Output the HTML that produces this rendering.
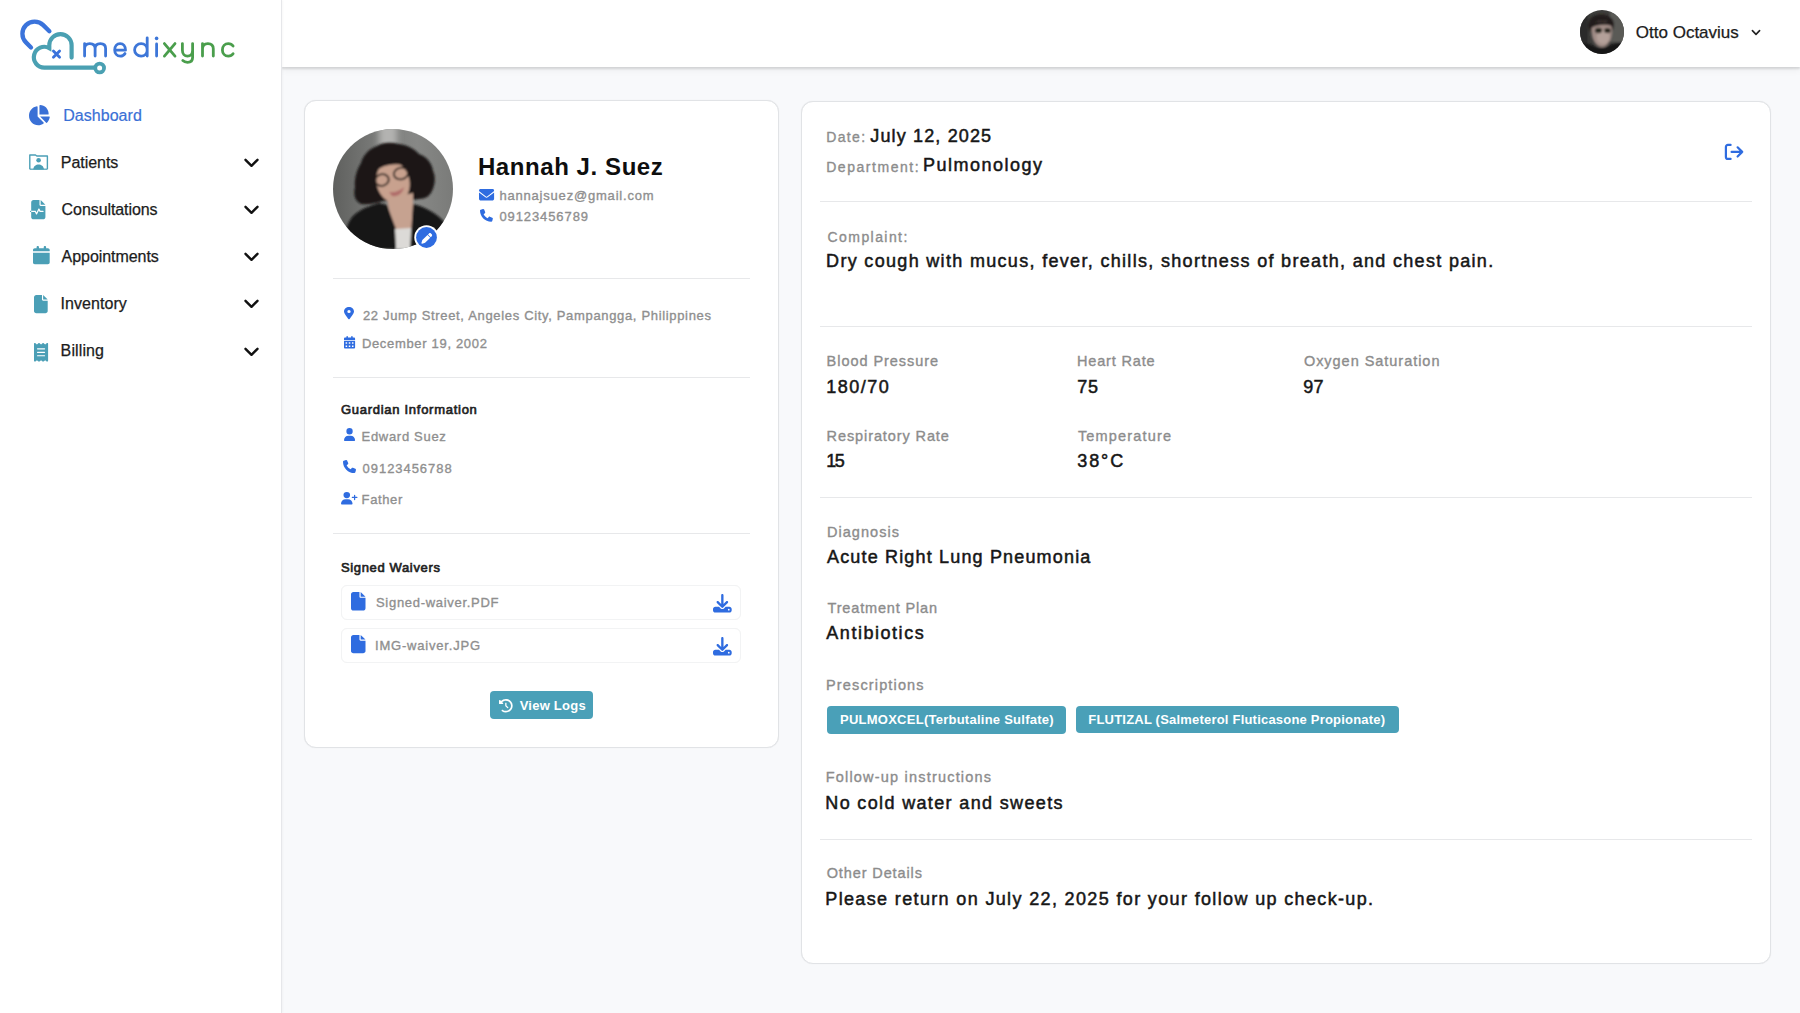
<!DOCTYPE html>
<html><head><meta charset="utf-8">
<style>
html,body{margin:0;padding:0;}
body{width:1800px;height:1013px;overflow:hidden;background:#f8f9fb;position:relative;font-family:"Liberation Sans",sans-serif;}
.t{position:absolute;white-space:nowrap;line-height:1;z-index:2;}
.ic{position:absolute;overflow:visible;z-index:2;}
.abs{position:absolute;}
#sidebar{left:0;top:0;width:281px;height:1013px;background:#fff;border-right:1px solid #e6e7ea;box-shadow:1px 0 2px rgba(0,0,0,0.03);z-index:1;}
#header{left:282px;top:0;width:1518px;height:67px;background:#fff;box-shadow:0 2px 2px rgba(0,0,0,0.12),0 3px 8px rgba(0,0,0,0.05);}
.card{position:absolute;background:#fff;border:1px solid #e1e3e6;border-radius:12px;box-sizing:border-box;box-shadow:0 0 1px rgba(0,0,0,0.10);}
.hr{position:absolute;height:1px;background:#e7e8ea;}
.frow{position:absolute;border:1px solid #f2f3f4;box-shadow:0 0 1px rgba(0,0,0,0.03);border-radius:6px;box-sizing:border-box;background:#fff;}
.badge{position:absolute;background:#4aa0b8;border-radius:4px;}
.chev{position:absolute;}
</style></head><body>
<div id="sidebar" class="abs"></div>
<div id="header" class="abs"></div>
<div class="card" style="left:304px;top:100px;width:475px;height:648px;"></div>
<div class="card" style="left:801px;top:101px;width:970px;height:863px;"></div>
<!-- card1 dividers -->
<div class="hr" style="left:333px;top:278px;width:417px;"></div>
<div class="hr" style="left:333px;top:377px;width:417px;"></div>
<div class="hr" style="left:333px;top:533px;width:417px;"></div>
<!-- card2 dividers -->
<div class="hr" style="left:820px;top:201px;width:932px;"></div>
<div class="hr" style="left:820px;top:326px;width:932px;"></div>
<div class="hr" style="left:820px;top:497px;width:932px;"></div>
<div class="hr" style="left:820px;top:839px;width:932px;"></div>
<!-- file rows -->
<div class="frow" style="left:341px;top:585px;width:400px;height:35px;"></div>
<div class="frow" style="left:341px;top:628px;width:400px;height:35px;"></div>
<!-- view logs -->
<div class="badge" style="left:490px;top:691px;width:103px;height:28px;"></div>
<!-- badges -->
<div class="badge" style="left:827px;top:705.5px;width:239px;height:28px;"></div>
<div class="badge" style="left:1075.5px;top:705.5px;width:323px;height:27.5px;"></div>

<!-- logo -->
<svg class="ic" style="left:0;top:0;width:250px;height:80px" viewBox="0 0 250 80">
  <path d="M31 47.4 L25.97 42.38 A12.2 12.2 0 0 1 43.23 25.12 L49.4 31.3" fill="none" stroke="#3a73db" stroke-width="4.3" stroke-linecap="round" stroke-linejoin="round"/>
  <path d="M71.6 57.6 V45.25 A11.15 11.15 0 0 0 49.3 45.25 V48.1 A10.4 10.4 0 1 0 44.3 67.6 H95" fill="none" stroke="#4aa0b2" stroke-width="4.2" stroke-linecap="round" stroke-linejoin="miter"/>
  <circle cx="99.65" cy="68" r="4.4" fill="none" stroke="#4aa0b2" stroke-width="3.8"/>
  <path d="M53.4 51.1 L59.6 57.3 M59.6 51.1 L53.4 57.3" stroke="#3a73db" stroke-width="2.8" stroke-linecap="round"/>
  <g fill="none" stroke-width="2.8" stroke-linecap="round" stroke-linejoin="round">
   <g stroke="#3d76d8">
    <path d="M84.6 56.1 V43.6 M84.6 48.6 C84.6 45.3 86.8 43.6 89.8 43.6 C92.8 43.6 95.1 45.3 95.1 48.6 V56.1 M95.1 48.6 C95.1 45.3 97.4 43.6 100.4 43.6 C103.4 43.6 105.6 45.3 105.6 48.6 V56.1"/>
    <path d="M114.8 50.2 H125.5 C125.5 46.3 123.3 43.6 120.1 43.6 C116.9 43.6 114.7 46.4 114.7 49.9 C114.7 53.5 117 56.1 120.3 56.1 C122.4 56.1 124 55.1 125 53.6"/>
    <path d="M147.2 37.8 V56.1 M147.2 49.9 C147.2 46.2 144.6 43.6 141.1 43.6 C137.5 43.6 134.6 46.4 134.6 49.9 C134.6 53.4 137.5 56.1 141.1 56.1 C144.6 56.1 147.2 53.5 147.2 49.9"/>
    <path d="M156.6 44 V56.1"/>
   </g>
   <circle cx="156.6" cy="38.4" r="1.8" fill="#3d76d8" stroke="none"/>
   <g stroke="#4a9e4c">
    <path d="M164.4 43.6 L175 56.1 M175 43.6 L164.4 56.1"/>
    <path d="M182.4 43.6 V50.2 C182.4 54 184.6 56.1 187.5 56.1 C190.4 56.1 192.6 54 192.6 50.2 M192.6 43.6 V57.5 C192.6 60.8 190.6 62.3 187.5 62.3 C185.4 62.3 183.8 61.6 182.8 60.6"/>
    <path d="M202.5 56.1 V43.6 M202.5 48.8 C202.5 45.4 204.8 43.6 207.9 43.6 C211 43.6 213.3 45.4 213.3 48.8 V56.1"/>
    <path d="M233.1 46 C232 44.4 230.3 43.6 228.3 43.6 C224.8 43.6 222.4 46.4 222.4 49.9 C222.4 53.4 224.8 56.1 228.3 56.1 C230.3 56.1 232 55.3 233.1 53.7"/>
   </g>
  </g>
</svg>

<!-- patients icon (folder with user) -->
<svg class="ic" style="left:28.9px;top:154px;width:19.2px;height:16px" viewBox="0 0 19.2 16">
  <path d="M0.8 15.2 V1 H6.5 L7.8 2 H18.4 V15.2" fill="none" stroke="#4b9fb6" stroke-width="1.4" stroke-linejoin="round"/>
  <circle cx="9.6" cy="6.3" r="2.3" fill="#4b9fb6"/>
  <path d="M4.2 15.6 C4.6 12 7 10.6 9.6 10.6 C12.2 10.6 14.6 12 15 15.6 Z" fill="#4b9fb6"/>
  <path d="M0.8 15.2 H18.4" stroke="#4b9fb6" stroke-width="1.2"/>
</svg>

<!-- chevrons -->
<svg class="ic" style="left:244px;top:157.8px;width:15px;height:10px" viewBox="0 0 15 10"><path d="M1.5 1.8 L7.5 7.8 L13.5 1.8" fill="none" stroke="#111" stroke-width="2.4" stroke-linecap="round" stroke-linejoin="round"/></svg>
<svg class="ic" style="left:244px;top:205.0px;width:15px;height:10px" viewBox="0 0 15 10"><path d="M1.5 1.8 L7.5 7.8 L13.5 1.8" fill="none" stroke="#111" stroke-width="2.4" stroke-linecap="round" stroke-linejoin="round"/></svg>
<svg class="ic" style="left:244px;top:252.2px;width:15px;height:10px" viewBox="0 0 15 10"><path d="M1.5 1.8 L7.5 7.8 L13.5 1.8" fill="none" stroke="#111" stroke-width="2.4" stroke-linecap="round" stroke-linejoin="round"/></svg>
<svg class="ic" style="left:244px;top:299.4px;width:15px;height:10px" viewBox="0 0 15 10"><path d="M1.5 1.8 L7.5 7.8 L13.5 1.8" fill="none" stroke="#111" stroke-width="2.4" stroke-linecap="round" stroke-linejoin="round"/></svg>
<svg class="ic" style="left:244px;top:346.6px;width:15px;height:10px" viewBox="0 0 15 10"><path d="M1.5 1.8 L7.5 7.8 L13.5 1.8" fill="none" stroke="#111" stroke-width="2.4" stroke-linecap="round" stroke-linejoin="round"/></svg>
<!-- header chevron -->
<svg class="ic" style="left:1751px;top:29px;width:10px;height:8px" viewBox="0 0 10 8"><path d="M1.4 1.6 L5 5.4 L8.6 1.6" fill="none" stroke="#222" stroke-width="1.6" stroke-linecap="round" stroke-linejoin="round"/></svg>

<!-- logout icon -->
<svg class="ic" style="left:1724px;top:143px;width:20px;height:17.5px" viewBox="0 0 20 17.5">
  <path d="M6.6 1.9 H3.9 A2 2 0 0 0 1.9 3.9 V13.9 A2 2 0 0 0 3.9 15.9 H6.6" fill="none" stroke="#2f6ce0" stroke-width="2.2" stroke-linecap="round" stroke-linejoin="round"/>
  <path d="M7.6 8.9 H18.2 M13.6 4.3 L18.2 8.9 L13.6 13.5" fill="none" stroke="#2f6ce0" stroke-width="2.2" stroke-linecap="round" stroke-linejoin="round"/>
</svg>

<!-- header avatar -->
<svg class="ic" style="left:1580px;top:10px;width:44px;height:44px" viewBox="0 0 44 44">
  <defs><clipPath id="ca"><circle cx="22" cy="22" r="22"/></clipPath>
  <filter id="bl1" x="-20%" y="-20%" width="140%" height="140%"><feGaussianBlur stdDeviation="0.8"/></filter></defs>
  <g clip-path="url(#ca)">
    <rect width="44" height="44" fill="#3d3d3b"/>
    <g filter="url(#bl1)">
    <rect x="30" y="-2" width="16" height="34" fill="#5a5a57"/>
    <rect x="-2" y="-2" width="10" height="46" fill="#2c2c2b"/>
    <path d="M8 16 C8 8 14 4 22 4.5 C30 5 34 9 34 15 L33 20 L10 22 Z" fill="#241f1d"/>
    <path d="M11.5 20 C11.5 13 16 11 22 11 C28 11 32 13.5 32 20 C32 30 28 37 22 37 C16 37 11.5 30 11.5 20 Z" fill="#a08c86"/>
    <ellipse cx="23" cy="27" rx="6.5" ry="7" fill="#b3a099"/>
    <path d="M10 15 C14 11 22 10 32 13 L32 16 C26 14 18 14 11 18 Z" fill="#231e1c"/>
    <ellipse cx="18.5" cy="20.5" rx="3.6" ry="2.7" fill="#25251f"/>
    <ellipse cx="27.5" cy="20.5" rx="3.3" ry="2.6" fill="#25251f"/>
    <path d="M-2 46 L-2 36 C4 32 10 33 16 37 C20 39 26 38 30 35 C34 33 40 32 46 34 L46 46 Z" fill="#171717"/>
    </g>
  </g>
</svg>

<!-- patient avatar -->
<svg class="ic" style="left:333px;top:129px;width:120px;height:120px" viewBox="0 0 120 120">
  <defs><clipPath id="cb"><circle cx="60" cy="60" r="60"/></clipPath>
  <filter id="bl2" x="-20%" y="-20%" width="140%" height="140%"><feGaussianBlur stdDeviation="1.1"/></filter>
  <filter id="bl3" x="-50%" y="-50%" width="200%" height="200%"><feGaussianBlur stdDeviation="3"/></filter>
  <linearGradient id="bg2" x1="0" y1="0" x2="1" y2="0"><stop offset="0" stop-color="#5f605e"/><stop offset="0.4" stop-color="#7d7e7c"/><stop offset="0.7" stop-color="#878886"/><stop offset="1" stop-color="#7a7b79"/></linearGradient></defs>
  <g clip-path="url(#cb)">
    <rect width="120" height="120" fill="url(#bg2)"/>
    <rect x="46" y="-6" width="18" height="26" fill="#b3b3b1" filter="url(#bl3)"/>
    <g filter="url(#bl2)">
    <path d="M44 17 C50 13 58 13 66 15 C74 16 82 20 86 25 C94 28 99 34 100 42 C103 48 102 56 99 62 C97 67 92 70 86 70 L72 72 L50 72 C44 74 36 76 28 75 C22 72 20 66 22 58 C21 50 24 40 28 34 C30 26 36 20 44 17 Z" fill="#1b1817"/>
    <ellipse cx="60" cy="53" rx="16.5" ry="21" transform="rotate(-14 60 53)" fill="#c8a18e"/>
    <path d="M40 40 C44 30 54 26 66 28 C74 30 80 34 82 40 C74 36 64 34 56 36 C50 37 44 40 40 44 Z" fill="#1b1817"/>
    <path d="M54 70 L80 64 L80 100 L60 100 Z" fill="#c6a290"/>
    <ellipse cx="49" cy="51" rx="6.8" ry="5.8" fill="none" stroke="#2c211d" stroke-width="1.9" transform="rotate(-14 49 51)"/>
    <ellipse cx="68" cy="44.5" rx="7.2" ry="5.8" fill="none" stroke="#2c211d" stroke-width="1.9" transform="rotate(-14 68 44.5)"/>
    <path d="M56 63 C61 64 67 62 71 58 C70 64 65 68 59 67 Z" fill="#b06d6a"/>
    <path d="M10 120 L14 98 C18 86 26 80 46 74 L54 76 L63 100 L63 120 Z" fill="#131313"/>
    <path d="M77 120 L80 75 C92 78 104 84 112 94 L114 120 Z" fill="#151515"/>
    <path d="M62 100 L78 99 L77 120 L63 120 Z" fill="#dcdad7"/>
    </g>
  </g>
</svg>
<!-- edit badge -->
<svg class="ic" style="left:414.2px;top:224.5px;width:25px;height:25px" viewBox="0 0 25 25">
  <circle cx="12.5" cy="12.5" r="12.2" fill="#fff"/>
  <circle cx="12.5" cy="12.5" r="10.4" fill="#2f6ce0"/>
  <g transform="translate(7.4,8) scale(0.021)"><path fill="#fff" d="M362.7 19.3L314.3 67.7 444.3 197.7l48.4-48.4c25-25 25-65.5 0-90.5L453.3 19.3c-25-25-65.5-25-90.5 0zm-71 71L58.6 323.5c-10.4 10.4-18 23.3-22.2 37.4L1 481.2C-1.5 489.7 .8 498.8 7 505s15.3 8.5 23.7 6.1l120.3-35.4c14.1-4.2 27-11.8 37.4-22.2L421.7 220.3 291.7 90.3z"/></g>
</svg>

<svg class=ic style="left:29.1px;top:105.3px;width:20.90px;height:20.30px" viewBox="32 0 544 512" preserveAspectRatio="none" ><g fill="#3a70d6"><path d="M304 240V16.6c0-9 7-16.6 16-16.6C443.7 0 544 100.3 544 224c0 9-7.6 16-16.6 16H304zM32 272C32 150.7 122.1 50.3 239 34.3c9.2-1.3 17 6.1 17 15.4V288L412.5 444.5c6.7 6.7 6.2 17.7-1.5 23.1C371.8 495.6 323.8 512 272 512C139.5 512 32 404.6 32 272zm526.4 16c9.3 0 16.6 7.8 15.4 17c-7.7 55.9-34.6 105.6-73.9 142.3c-6 5.6-15.4 5.2-21.2-.7L320 288H558.4z"/></g></svg>
<svg class=ic style="left:30.3px;top:199.9px;width:16.60px;height:19.30px" viewBox="0 0 448 512" preserveAspectRatio="none" ><g fill="#4b9fb6"><path d="M96 0C60.7 0 32 28.7 32 64V288H144c6.1 0 11.6 3.4 14.3 8.8L176 332.2l49.7-99.4c2.7-5.4 8.2-8.8 14.3-8.8s11.6 3.4 14.3 8.8L281.9 288H352c8.8 0 16 7.2 16 16s-7.2 16-16 16H272c-6.1 0-11.6-3.4-14.3-8.8L240 275.8l-49.7 99.4c-2.7 5.4-8.2 8.8-14.3 8.8s-11.6-3.4-14.3-8.8L134.1 320H32V448c0 35.3 28.7 64 64 64H352c35.3 0 64-28.7 64-64V160H288c-17.7 0-32-14.3-32-32V0H96zM288 0V128H416L288 0z"/><path d="M0 304c0-8.8 7.2-16 16-16H32v32H16c-8.8 0-16-7.2-16-16z"/></g></svg>
<svg class=ic style="left:32.7px;top:245.8px;width:16.70px;height:18.30px" viewBox="0 0 448 512" preserveAspectRatio="none" ><g fill="#4b9fb6"><path d="M96 32V64H48C21.5 64 0 85.5 0 112v36H448V112c0-26.5-21.5-48-48-48H352V32c0-17.7-14.3-32-32-32s-32 14.3-32 32V64H160V32c0-17.7-14.3-32-32-32S96 14.3 96 32zM448 192H0V464c0 26.5 21.5 48 48 48H400c26.5 0 48-21.5 48-48V192z"/></g></svg>
<svg class=ic style="left:34.0px;top:294.6px;width:13.70px;height:18.30px" viewBox="0 0 384 512" preserveAspectRatio="none" ><g fill="#4b9fb6"><path d="M0 64C0 28.7 28.7 0 64 0H224V128c0 17.7 14.3 32 32 32H384V448c0 35.3-28.7 64-64 64H64c-35.3 0-64-28.7-64-64V64zm384 64H256V0L384 128z"/></g></svg>
<svg class=ic style="left:34.3px;top:342.7px;width:14.10px;height:18.60px" viewBox="0 0 384 512" preserveAspectRatio="none" ><g fill="#4b9fb6"><path d="M14 2.2C22.5-1.7 32.5-.3 39.6 5.8L80 40.4 120.4 5.8c9-7.7 22.3-7.7 31.2 0L192 40.4 232.4 5.8c9-7.7 22.3-7.7 31.2 0L304 40.4 344.4 5.8c7.1-6.1 17.1-7.5 25.6-3.6s14 12.4 14 21.8V488c0 9.4-5.5 17.9-14 21.8s-18.5 2.5-25.6-3.6L304 471.6l-40.4 34.6c-9 7.7-22.3 7.7-31.2 0L192 471.6l-40.4 34.6c-9 7.7-22.3 7.7-31.2 0L80 471.6 39.6 506.2c-7.1 6.1-17.1 7.5-25.6 3.6S0 497.4 0 488V24C0 14.6 5.5 6.1 14 2.2zM96 144c-8.8 0-16 7.2-16 16s7.2 16 16 16H288c8.8 0 16-7.2 16-16s-7.2-16-16-16H96zM80 352c0 8.8 7.2 16 16 16H288c8.8 0 16-7.2 16-16s-7.2-16-16-16H96c-8.8 0-16 7.2-16 16zM96 240c-8.8 0-16 7.2-16 16s7.2 16 16 16H288c8.8 0 16-7.2 16-16s-7.2-16-16-16H96z"/></g></svg>
<svg class=ic style="left:479.2px;top:189.2px;width:15.10px;height:11.60px" viewBox="0 64 512 384" preserveAspectRatio="none" ><g fill="#2f6ce0"><path d="M48 64C21.5 64 0 85.5 0 112c0 15.1 7.1 29.3 19.2 38.4L236.8 313.6c11.4 8.5 27 8.5 38.4 0L492.8 150.4c12.1-9.1 19.2-23.3 19.2-38.4c0-26.5-21.5-48-48-48H48zM0 176V384c0 35.3 28.7 64 64 64H448c35.3 0 64-28.7 64-64V176L294.4 339.2c-22.8 17.1-54 17.1-76.8 0L0 176z"/></g></svg>
<svg class=ic style="left:480.2px;top:208.9px;width:12.90px;height:12.80px" viewBox="0 0 512 512" preserveAspectRatio="none" ><g fill="#2f6ce0"><path d="M164.9 24.6c-7.7-18.6-28-28.5-47.4-23.2l-88 24C12.1 30.2 0 46 0 64C0 311.4 200.6 512 448 512c18 0 33.8-12.1 38.6-29.5l24-88c5.3-19.4-4.6-39.7-23.2-47.4l-96-40c-16.3-6.8-35.2-2.1-46.3 11.6L304.7 368C234.3 334.7 177.3 277.7 144 207.3L193.3 167c13.7-11.2 18.4-30 11.6-46.3l-40-96z"/></g></svg>
<svg class=ic style="left:344.4px;top:307.2px;width:10.00px;height:12.20px" viewBox="0 0 384 512" preserveAspectRatio="none" ><g fill="#2f6ce0"><path d="M215.7 499.2C267 435 384 279.4 384 192C384 86 298 0 192 0S0 86 0 192c0 87.4 117 243 168.3 307.2c12.3 15.3 35.1 15.3 47.4 0zM192 128a64 64 0 1 1 0 128 64 64 0 1 1 0-128z"/></g></svg>
<svg class=ic style="left:343.8px;top:335.7px;width:11.10px;height:12.60px" viewBox="0 0 448 512" preserveAspectRatio="none" ><g fill="#2f6ce0"><path d="M128 0c17.7 0 32 14.3 32 32V64H288V32c0-17.7 14.3-32 32-32s32 14.3 32 32V64h48c26.5 0 48 21.5 48 48v48H0V112C0 85.5 21.5 64 48 64H96V32c0-17.7 14.3-32 32-32zM0 192H448V464c0 26.5-21.5 48-48 48H48c-26.5 0-48-21.5-48-48V192zm64 80v32c0 8.8 7.2 16 16 16h32c8.8 0 16-7.2 16-16V272c0-8.8-7.2-16-16-16H80c-8.8 0-16 7.2-16 16zm128 0v32c0 8.8 7.2 16 16 16h32c8.8 0 16-7.2 16-16V272c0-8.8-7.2-16-16-16H208c-8.8 0-16 7.2-16 16zm144-16c-8.8 0-16 7.2-16 16v32c0 8.8 7.2 16 16 16h32c8.8 0 16-7.2 16-16V272c0-8.8-7.2-16-16-16H336zM64 400v32c0 8.8 7.2 16 16 16h32c8.8 0 16-7.2 16-16V400c0-8.8-7.2-16-16-16H80c-8.8 0-16 7.2-16 16zm144-16c-8.8 0-16 7.2-16 16v32c0 8.8 7.2 16 16 16h32c8.8 0 16-7.2 16-16V400c0-8.8-7.2-16-16-16H208zm112 16v32c0 8.8 7.2 16 16 16h32c8.8 0 16-7.2 16-16V400c0-8.8-7.2-16-16-16H336c-8.8 0-16 7.2-16 16z"/></g></svg>
<svg class=ic style="left:344.0px;top:427.6px;width:11.10px;height:13.00px" viewBox="0 0 448 512" preserveAspectRatio="none" ><g fill="#2f6ce0"><path d="M224 256A128 128 0 1 0 224 0a128 128 0 1 0 0 256zm-45.7 48C79.8 304 0 383.8 0 482.3C0 498.7 13.3 512 29.7 512H418.3c16.4 0 29.7-13.3 29.7-29.7C448 383.8 368.2 304 269.7 304H178.3z"/></g></svg>
<svg class=ic style="left:343.3px;top:459.6px;width:13.00px;height:13.00px" viewBox="0 0 512 512" preserveAspectRatio="none" ><g fill="#2f6ce0"><path d="M164.9 24.6c-7.7-18.6-28-28.5-47.4-23.2l-88 24C12.1 30.2 0 46 0 64C0 311.4 200.6 512 448 512c18 0 33.8-12.1 38.6-29.5l24-88c5.3-19.4-4.6-39.7-23.2-47.4l-96-40c-16.3-6.8-35.2-2.1-46.3 11.6L304.7 368C234.3 334.7 177.3 277.7 144 207.3L193.3 167c13.7-11.2 18.4-30 11.6-46.3l-40-96z"/></g></svg>
<svg class=ic style="left:341.3px;top:491.6px;width:16.50px;height:12.40px" viewBox="0 0 640 512" preserveAspectRatio="none" ><g fill="#2f6ce0"><path d="M96 128a128 128 0 1 1 256 0A128 128 0 1 1 96 128zM0 482.3C0 383.8 79.8 304 178.3 304h91.4C368.2 304 448 383.8 448 482.3c0 16.4-13.3 29.7-29.7 29.7H29.7C13.3 512 0 498.7 0 482.3zM504 312V248H440c-13.3 0-24-10.7-24-24s10.7-24 24-24h64V136c0-13.3 10.7-24 24-24s24 10.7 24 24v64h64c13.3 0 24 10.7 24 24s-10.7 24-24 24H552v64c0 13.3-10.7 24-24 24s-24-10.7-24-24z"/></g></svg>
<svg class=ic style="left:351.3px;top:591.7px;width:14.50px;height:18.50px" viewBox="0 0 384 512" preserveAspectRatio="none" ><g fill="#2f6ce0"><path d="M0 64C0 28.7 28.7 0 64 0H224V128c0 17.7 14.3 32 32 32H384V448c0 35.3-28.7 64-64 64H64c-35.3 0-64-28.7-64-64V64zm384 64H256V0L384 128z"/></g></svg>
<svg class=ic style="left:351.3px;top:635.0px;width:14.50px;height:18.30px" viewBox="0 0 384 512" preserveAspectRatio="none" ><g fill="#2f6ce0"><path d="M0 64C0 28.7 28.7 0 64 0H224V128c0 17.7 14.3 32 32 32H384V448c0 35.3-28.7 64-64 64H64c-35.3 0-64-28.7-64-64V64zm384 64H256V0L384 128z"/></g></svg>
<svg class=ic style="left:712.5px;top:593.7px;width:18.70px;height:18.60px" viewBox="0 0 512 512" preserveAspectRatio="none" ><g fill="#2f6ce0"><path d="M288 32c0-17.7-14.3-32-32-32s-32 14.3-32 32V274.7l-73.4-73.4c-12.5-12.5-32.8-12.5-45.3 0s-12.5 32.8 0 45.3l128 128c12.5 12.5 32.8 12.5 45.3 0l128-128c12.5-12.5 12.5-32.8 0-45.3s-32.8-12.5-45.3 0L288 274.7V32zM64 352c-35.3 0-64 28.7-64 64v32c0 35.3 28.7 64 64 64H448c35.3 0 64-28.7 64-64V416c0-35.3-28.7-64-64-64H346.5l-45.3 45.3c-25 25-65.5 25-90.5 0L165.5 352H64zm368 56a24 24 0 1 1 0 48 24 24 0 1 1 0-48z"/></g></svg>
<svg class=ic style="left:712.5px;top:636.8px;width:18.70px;height:18.60px" viewBox="0 0 512 512" preserveAspectRatio="none" ><g fill="#2f6ce0"><path d="M288 32c0-17.7-14.3-32-32-32s-32 14.3-32 32V274.7l-73.4-73.4c-12.5-12.5-32.8-12.5-45.3 0s-12.5 32.8 0 45.3l128 128c12.5 12.5 32.8 12.5 45.3 0l128-128c12.5-12.5 12.5-32.8 0-45.3s-32.8-12.5-45.3 0L288 274.7V32zM64 352c-35.3 0-64 28.7-64 64v32c0 35.3 28.7 64 64 64H448c35.3 0 64-28.7 64-64V416c0-35.3-28.7-64-64-64H346.5l-45.3 45.3c-25 25-65.5 25-90.5 0L165.5 352H64zm368 56a24 24 0 1 1 0 48 24 24 0 1 1 0-48z"/></g></svg>
<svg class=ic style="left:499.0px;top:699.0px;width:13.70px;height:13.50px" viewBox="0 0 512 512" preserveAspectRatio="none" ><g fill="#ffffff"><path d="M75 75L41 41C25.9 25.9 0 36.6 0 57.9V168c0 13.3 10.7 24 24 24H134.1c21.4 0 32.1-25.9 17-41l-30.8-30.8C155 85.5 203 64 256 64c106 0 192 86 192 192s-86 192-192 192c-40.8 0-78.6-12.7-109.7-34.4c-14.5-10.1-34.4-6.6-44.6 7.9s-6.6 34.4 7.9 44.6C151.2 495 201.7 512 256 512c141.4 0 256-114.6 256-256S397.4 0 256 0C185.3 0 121.3 28.7 75 75zm181 53c-13.3 0-24 10.7-24 24V256c0 6.4 2.5 12.5 7 17l72 72c9.4 9.4 24.6 9.4 33.9 0s9.4-24.6 0-33.9l-65-65V152c0-13.3-10.7-24-24-24z"/></g></svg>
<div class=t style="left:63.20px;top:107.75px;font-size:16px;font-weight:400;color:#3a70d6;letter-spacing:0.041px;-webkit-text-stroke:0.2px #3a70d6;">Dashboard</div>
<div class=t style="left:60.80px;top:154.65px;font-size:16px;font-weight:400;color:#1c1c1c;letter-spacing:-0.045px;-webkit-text-stroke:0.25px #1c1c1c;">Patients</div>
<div class=t style="left:61.60px;top:201.85px;font-size:16px;font-weight:400;color:#1c1c1c;letter-spacing:-0.079px;-webkit-text-stroke:0.25px #1c1c1c;">Consultations</div>
<div class=t style="left:61.60px;top:249.15px;font-size:16px;font-weight:400;color:#1c1c1c;letter-spacing:-0.058px;-webkit-text-stroke:0.25px #1c1c1c;">Appointments</div>
<div class=t style="left:60.60px;top:295.85px;font-size:16px;font-weight:400;color:#1c1c1c;letter-spacing:0.048px;-webkit-text-stroke:0.25px #1c1c1c;">Inventory</div>
<div class=t style="left:60.60px;top:342.85px;font-size:16px;font-weight:400;color:#1c1c1c;letter-spacing:0.118px;-webkit-text-stroke:0.25px #1c1c1c;">Billing</div>
<div class=t style="left:1635.80px;top:23.91px;font-size:17px;font-weight:400;color:#1c1c1c;letter-spacing:0.002px;-webkit-text-stroke:0.25px #1c1c1c;">Otto Octavius</div>
<div class=t style="left:477.90px;top:154.88px;font-size:24px;font-weight:700;color:#0e0e0e;letter-spacing:0.579px;">Hannah J. Suez</div>
<div class=t style="left:499.40px;top:188.69px;font-size:13px;font-weight:400;color:#8f8f8f;letter-spacing:0.805px;-webkit-text-stroke:0.35px #8f8f8f;">hannajsuez@gmail.com</div>
<div class=t style="left:499.40px;top:210.09px;font-size:13px;font-weight:400;color:#8f8f8f;letter-spacing:0.910px;-webkit-text-stroke:0.35px #8f8f8f;">09123456789</div>
<div class=t style="left:362.90px;top:308.89px;font-size:13px;font-weight:400;color:#8f8f8f;letter-spacing:0.666px;-webkit-text-stroke:0.35px #8f8f8f;">22 Jump Street, Angeles City, Pampangga, Philippines</div>
<div class=t style="left:361.90px;top:337.29px;font-size:13px;font-weight:400;color:#8f8f8f;letter-spacing:0.678px;-webkit-text-stroke:0.35px #8f8f8f;">December 19, 2002</div>
<div class=t style="left:340.90px;top:402.69px;font-size:13px;font-weight:400;color:#222222;letter-spacing:0.727px;-webkit-text-stroke:0.65px #222222;">Guardian Information</div>
<div class=t style="left:361.60px;top:429.59px;font-size:13px;font-weight:400;color:#8f8f8f;letter-spacing:0.688px;-webkit-text-stroke:0.35px #8f8f8f;">Edward Suez</div>
<div class=t style="left:362.60px;top:461.59px;font-size:13px;font-weight:400;color:#8f8f8f;letter-spacing:0.950px;-webkit-text-stroke:0.35px #8f8f8f;">09123456788</div>
<div class=t style="left:361.60px;top:492.79px;font-size:13px;font-weight:400;color:#8f8f8f;letter-spacing:0.611px;-webkit-text-stroke:0.35px #8f8f8f;">Father</div>
<div class=t style="left:340.90px;top:560.89px;font-size:13px;font-weight:400;color:#222222;letter-spacing:0.650px;-webkit-text-stroke:0.65px #222222;">Signed Waivers</div>
<div class=t style="left:376.00px;top:596.09px;font-size:13px;font-weight:400;color:#8f8f8f;letter-spacing:0.698px;-webkit-text-stroke:0.35px #8f8f8f;">Signed-waiver.PDF</div>
<div class=t style="left:375.00px;top:639.09px;font-size:13px;font-weight:400;color:#8f8f8f;letter-spacing:0.799px;-webkit-text-stroke:0.35px #8f8f8f;">IMG-waiver.JPG</div>
<div class=t style="left:519.70px;top:698.89px;font-size:13px;font-weight:700;color:#ffffff;letter-spacing:0.234px;">View Logs</div>
<div class=t style="left:826.20px;top:130.35px;font-size:14px;font-weight:400;color:#8c8c8c;letter-spacing:1.382px;-webkit-text-stroke:0.35px #8c8c8c;">Date:</div>
<div class=t style="left:870.30px;top:126.96px;font-size:18px;font-weight:400;color:#161616;letter-spacing:1.144px;-webkit-text-stroke:0.5px #161616;">July 12, 2025</div>
<div class=t style="left:826.20px;top:159.55px;font-size:14px;font-weight:400;color:#8c8c8c;letter-spacing:1.546px;-webkit-text-stroke:0.35px #8c8c8c;">Department:</div>
<div class=t style="left:923.00px;top:156.16px;font-size:18px;font-weight:400;color:#161616;letter-spacing:1.504px;-webkit-text-stroke:0.5px #161616;">Pulmonology</div>
<div class=t style="left:827.60px;top:229.95px;font-size:14px;font-weight:400;color:#8c8c8c;letter-spacing:1.419px;-webkit-text-stroke:0.35px #8c8c8c;">Complaint:</div>
<div class=t style="left:826.10px;top:252.46px;font-size:18px;font-weight:400;color:#161616;letter-spacing:1.317px;-webkit-text-stroke:0.5px #161616;">Dry cough with mucus, fever, chills, shortness of breath, and chest pain.</div>
<div class=t style="left:826.60px;top:354.32px;font-size:14.5px;font-weight:400;color:#8c8c8c;letter-spacing:0.948px;-webkit-text-stroke:0.35px #8c8c8c;">Blood Pressure</div>
<div class=t style="left:826.20px;top:377.56px;font-size:18px;font-weight:400;color:#161616;letter-spacing:1.511px;-webkit-text-stroke:0.5px #161616;">180/70</div>
<div class=t style="left:1076.90px;top:354.32px;font-size:14.5px;font-weight:400;color:#8c8c8c;letter-spacing:0.850px;-webkit-text-stroke:0.35px #8c8c8c;">Heart Rate</div>
<div class=t style="left:1077.20px;top:377.56px;font-size:18px;font-weight:400;color:#161616;letter-spacing:0.689px;-webkit-text-stroke:0.5px #161616;">75</div>
<div class=t style="left:1303.90px;top:354.32px;font-size:14.5px;font-weight:400;color:#8c8c8c;letter-spacing:0.967px;-webkit-text-stroke:0.35px #8c8c8c;">Oxygen Saturation</div>
<div class=t style="left:1303.20px;top:377.56px;font-size:18px;font-weight:400;color:#161616;letter-spacing:0.289px;-webkit-text-stroke:0.5px #161616;">97</div>
<div class=t style="left:826.60px;top:429.02px;font-size:14.5px;font-weight:400;color:#8c8c8c;letter-spacing:0.898px;-webkit-text-stroke:0.35px #8c8c8c;">Respiratory Rate</div>
<div class=t style="left:826.20px;top:451.76px;font-size:18px;font-weight:400;color:#161616;letter-spacing:-1.411px;-webkit-text-stroke:0.5px #161616;">15</div>
<div class=t style="left:1077.90px;top:429.02px;font-size:14.5px;font-weight:400;color:#8c8c8c;letter-spacing:1.176px;-webkit-text-stroke:0.35px #8c8c8c;">Temperature</div>
<div class=t style="left:1077.20px;top:451.76px;font-size:18px;font-weight:400;color:#161616;letter-spacing:1.927px;-webkit-text-stroke:0.5px #161616;">38°C</div>
<div class=t style="left:827.00px;top:524.72px;font-size:14.5px;font-weight:400;color:#8c8c8c;letter-spacing:1.035px;-webkit-text-stroke:0.35px #8c8c8c;">Diagnosis</div>
<div class=t style="left:827.00px;top:548.06px;font-size:18px;font-weight:400;color:#161616;letter-spacing:1.166px;-webkit-text-stroke:0.5px #161616;">Acute Right Lung Pneumonia</div>
<div class=t style="left:827.50px;top:601.02px;font-size:14.5px;font-weight:400;color:#8c8c8c;letter-spacing:0.844px;-webkit-text-stroke:0.35px #8c8c8c;">Treatment Plan</div>
<div class=t style="left:826.30px;top:623.96px;font-size:18px;font-weight:400;color:#161616;letter-spacing:1.536px;-webkit-text-stroke:0.5px #161616;">Antibiotics</div>
<div class=t style="left:826.00px;top:677.72px;font-size:14.5px;font-weight:400;color:#8c8c8c;letter-spacing:1.145px;-webkit-text-stroke:0.35px #8c8c8c;">Prescriptions</div>
<div class=t style="left:840.00px;top:712.69px;font-size:13px;font-weight:700;color:#ffffff;letter-spacing:0.252px;">PULMOXCEL(Terbutaline Sulfate)</div>
<div class=t style="left:1088.30px;top:712.69px;font-size:13px;font-weight:700;color:#ffffff;letter-spacing:0.206px;">FLUTIZAL (Salmeterol Fluticasone Propionate)</div>
<div class=t style="left:825.70px;top:770.22px;font-size:14.5px;font-weight:400;color:#8c8c8c;letter-spacing:1.197px;-webkit-text-stroke:0.35px #8c8c8c;">Follow-up instructions</div>
<div class=t style="left:825.30px;top:793.96px;font-size:18px;font-weight:400;color:#161616;letter-spacing:1.352px;-webkit-text-stroke:0.5px #161616;">No cold water and sweets</div>
<div class=t style="left:826.70px;top:866.42px;font-size:14.5px;font-weight:400;color:#8c8c8c;letter-spacing:0.886px;-webkit-text-stroke:0.35px #8c8c8c;">Other Details</div>
<div class=t style="left:825.30px;top:889.76px;font-size:18px;font-weight:400;color:#161616;letter-spacing:1.354px;-webkit-text-stroke:0.5px #161616;">Please return on July 22, 2025 for your follow up check-up.</div>
</body></html>
